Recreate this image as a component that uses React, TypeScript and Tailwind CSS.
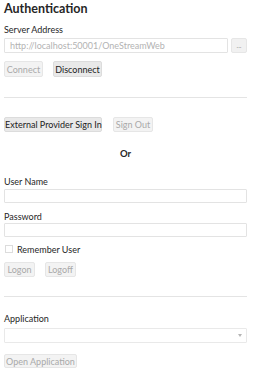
import React from "react";

function Btn({ label, width, disabled }: { label: string; width: string; disabled?: boolean }) {
    return (
        <button
            className={`${width} h-full shrink-0 whitespace-nowrap rounded-[2px] border text-[9px] leading-none ${
                disabled
                    ? "border-[#e6e6e6] bg-[#f3f3f3] text-[#a9a9a9]"
                    : "border-[#dcdcdc] bg-[#e9e9e9] text-[#222]"
            }`}
        >
            {label}
        </button>
    );
}

function Label({ text, className }: { text: string; className: string }) {
    return <div className={`${className} h-[12px] text-[9px] leading-[12px] text-[#262626]`}>{text}</div>;
}

export default function App() {
    return (
        <div
            className="w-[255px] h-[374px] bg-white pl-[4px] pr-[8px] overflow-hidden"
            style={{ fontFamily: 'Lato, "Open Sans", sans-serif' }}
        >
            <h1 className="h-[18px] text-[12.5px] font-bold leading-[18px] text-[#262626]">Authentication</h1>

            <Label text="Server Address" className="mt-[6px]" />
            <div className="mt-[2px] flex h-[15px] gap-[3px]">
                <div className="flex flex-1 items-center whitespace-nowrap rounded-[1px] border border-[#e3e3e3] px-[5px] text-[9px] text-[#b3b3b3]">
                    http://localhost:50001/OneStreamWeb
                </div>
                <button className="w-[16px] shrink-0 rounded-[2px] border border-[#e6e6e6] bg-[#f1f1f1] text-[7px] leading-none text-[#999]">
                    ...
                </button>
            </div>

            <div className="mt-[8px] flex h-[16px] gap-[10px]">
                <Btn label="Connect" width="w-[39px]" disabled />
                <Btn label="Disconnect" width="w-[49px]" />
            </div>

            <div className="mt-[20px] h-px bg-[#e4e4e4]" />

            <div className="mt-[19px] flex h-[15px] gap-[11px]">
                <Btn label="External Provider Sign In" width="w-[98px]" />
                <Btn label="Sign Out" width="w-[40px]" disabled />
            </div>

            <div className="mt-[16px] h-[12px] text-center text-[9.5px] font-bold leading-[12px] text-[#262626]">Or</div>

            <Label text="User Name" className="mt-[16px]" />
            <div className="mt-[1px] h-[14px] rounded-[1px] border border-[#e3e3e3]" />

            <Label text="Password" className="mt-[8px]" />
            <div className="h-[14px] rounded-[1px] border border-[#e3e3e3]" />

            <div className="mt-[7px] flex h-[10px] items-center gap-[4px] pl-[1px]">
                <div className="h-[8px] w-[8px] border border-[#dcdcdc] bg-white" />
                <span className="text-[9px] leading-none text-[#262626]">Remember User</span>
            </div>

            <div className="mt-[8px] flex h-[15px] gap-[10px]">
                <Btn label="Logon" width="w-[31px]" disabled />
                <Btn label="Logoff" width="w-[31px]" disabled />
            </div>

            <div className="mt-[19px] h-px bg-[#e4e4e4]" />

            <Label text="Application" className="mt-[16px]" />
            <div className="mt-[3px] flex h-[15px] items-center justify-end rounded-[1px] border border-[#e9e9e9] pr-[4px]">
                <svg width="4" height="3" viewBox="0 0 4 3">
                    <path d="M0 0 L4 0 L2 3 Z" fill="#b5b5b5" />
                </svg>
            </div>

            <div className="mt-[11px] flex h-[14px]">
                <Btn label="Open Application" width="w-[73px]" disabled />
            </div>
        </div>
    );
}
